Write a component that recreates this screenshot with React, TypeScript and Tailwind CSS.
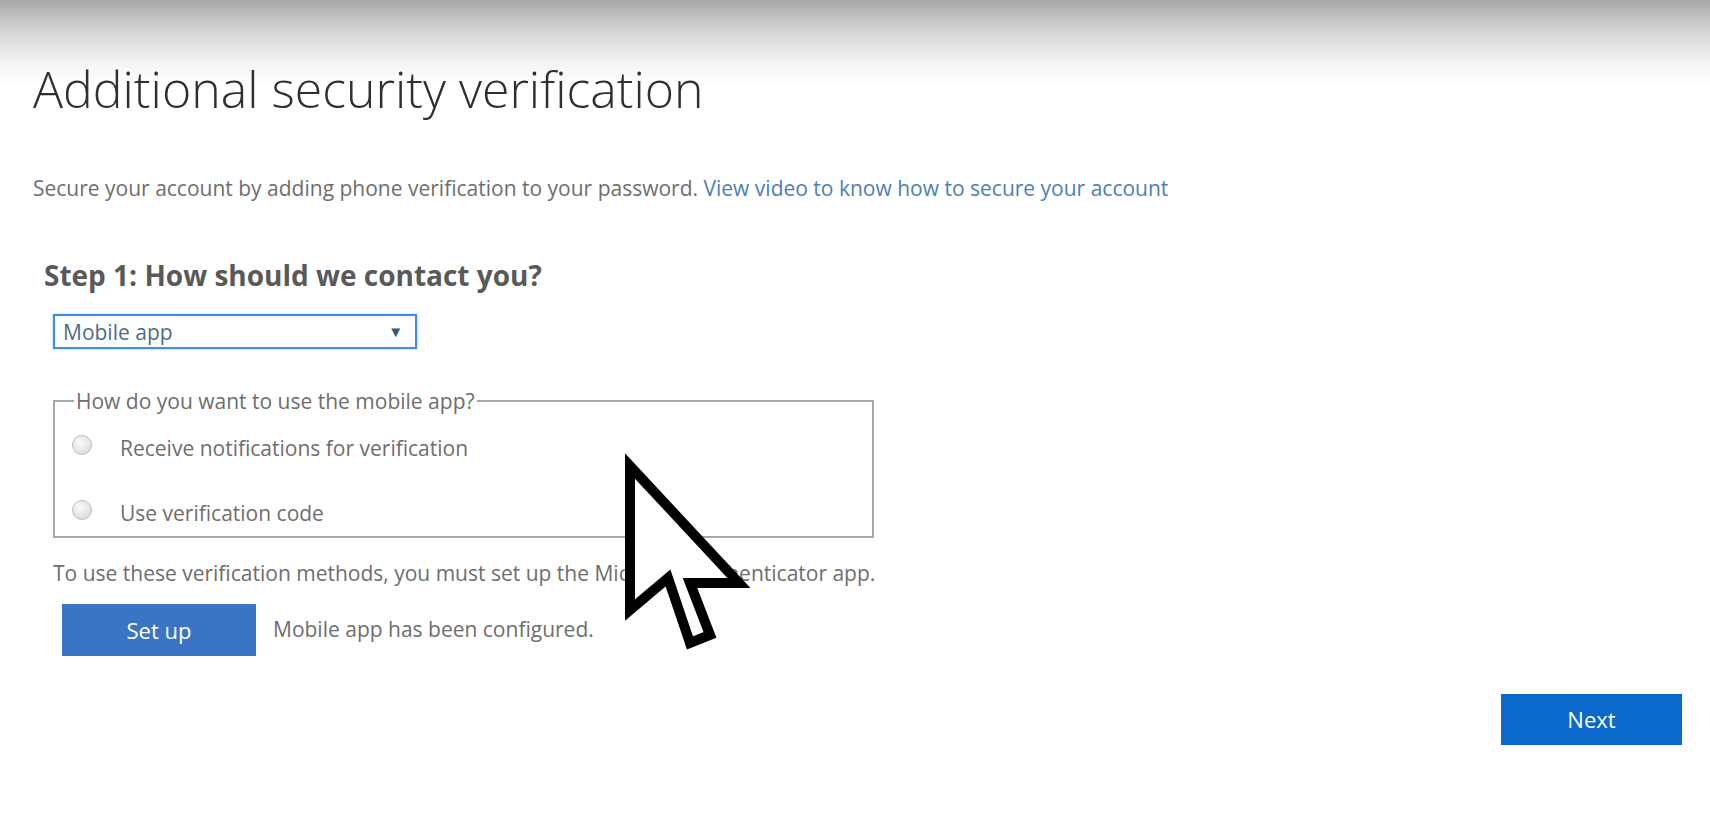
const Radio = ({ label }: { label: string }) => (
    <label className="flex items-center">
        <span className="mb-[6px] h-[20px] w-[20px] shrink-0 rounded-full border border-[#bdbdbd] bg-[radial-gradient(circle_at_40%_35%,#fafafa_0%,#e6e6e6_55%,#d0d0d0_100%)]" />
        <span className="ml-[28px] text-[21px] leading-[28px] text-[#6e6e6e]">{label}</span>
    </label>
);

const Cursor = () => (
    <svg
        className="pointer-events-none absolute left-[620px] top-[450px]"
        width="135"
        height="210"
        viewBox="0 0 135 210"
    >
        <polygon
            points="10,16 10,160 48,128 70,193 90,185 70,133 119,133"
            fill="#ffffff"
            stroke="#000000"
            strokeWidth="10"
            strokeLinejoin="miter"
            strokeMiterlimit="4"
        />
    </svg>
);

export default function App() {
    return (
        <div className="relative h-[830px] w-full overflow-hidden bg-[linear-gradient(to_bottom,#a8a8a8_0px,#d4d4d4_30px,#f3f3f3_62px,#ffffff_85px)] font-['Open_Sans',sans-serif]">
            <div className="pl-[33px] pt-[59px]">
                <h1 className="text-[50px] font-light leading-[60px] text-[#2f2f2f]">Additional security verification</h1>

                <p className="mt-[55px] text-[21px] leading-[28px] text-[#6e6e6e]">
                    Secure your account by adding phone verification to your password.{' '}
                    <a href="#" className="text-[#4c80b4]">View video to know how to secure your account</a>
                </p>

                <h2 className="ml-[11px] mt-[57px] text-[28px] font-bold leading-[32px] text-[#595959]">
                    Step 1: How should we contact you?
                </h2>

                <div className="ml-[20px] mt-[23px] flex h-[35px] w-[364px] items-center justify-between border-2 border-[#3c8fe2] pl-[8px] pr-[12px] shadow-[0_0_2px_#8ec0f0]">
                    <span className="text-[21px] leading-[28px] text-[#4e6b88]">Mobile app</span>
                    <span className="text-[15px] leading-none text-[#2c5a82]">▼</span>
                </div>

                <fieldset className="ml-[20px] mt-[40px] w-[821px] border-2 border-[#a9a9a9] pb-[9px] pl-[17px]">
                    <legend className="ml-[2px] px-[2px] text-[21px] leading-[24px] text-[#6e6e6e]">
                        How do you want to use the mobile app?
                    </legend>
                    <div className="mt-[21px] flex flex-col gap-[37px]">
                        <Radio label="Receive notifications for verification" />
                        <Radio label="Use verification code" />
                    </div>
                </fieldset>

                <p className="ml-[20px] mt-[21px] text-[21px] leading-[28px] text-[#6e6e6e]">
                    To use these verification methods, you must set up the Microsoft Authenticator app.
                </p>

                <div className="ml-[29px] mt-[17px] flex items-center gap-[17px]">
                    <button className="h-[52px] w-[194px] bg-[#3a74c5] text-[22px] text-white">Set up</button>
                    <span className="text-[21px] text-[#6e6e6e]">Mobile app has been configured.</span>
                </div>

                <div className="mt-[38px] flex justify-end pr-[28px]">
                    <button className="h-[51px] w-[181px] bg-[#0b69cc] text-[22px] text-white">Next</button>
                </div>
            </div>
            <Cursor />
        </div>
    );
}
